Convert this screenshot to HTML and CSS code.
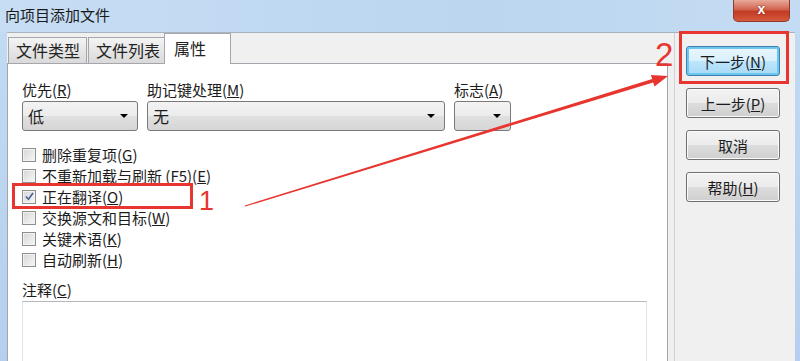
FILE: index.html
```html
<!DOCTYPE html>
<html lang="zh-CN">
<head>
    <meta charset="UTF-8">
    <meta name="viewport" content="width=device-width, initial-scale=1.0">
    <title>向项目添加文件</title>
    <link rel="stylesheet" href="styles.css">
</head>
<body>
    <div class="window">
        <!-- Title bar -->
        <div class="titlebar">
            <span class="title">向项目添加文件</span>
            <div class="close">x</div>
        </div>

        <div class="client">
            <!-- Tab control -->
            <div class="left-pane">
                <div class="tabs">
                    <div class="tab tab-type">文件类型</div>
                    <div class="tab tab-list">文件列表</div>
                    <div class="tab active">属性</div>
                </div>

                <div class="panel">
                    <div class="fields">
                        <div class="field">
                            <div class="label">优先(<u>R</u>)</div>
                            <div class="combo"><span>低</span><span class="arrow"></span></div>
                        </div>
                        <div class="field">
                            <div class="label">助记键处理(<u>M</u>)</div>
                            <div class="combo"><span>无</span><span class="arrow"></span></div>
                        </div>
                        <div class="field">
                            <div class="label">标志(<u>A</u>)</div>
                            <div class="combo"><span></span><span class="arrow"></span></div>
                        </div>
                    </div>

                    <ul class="checks">
                        <li><span class="box"></span>删除重复项(<u>G</u>)</li>
                        <li><span class="box"></span>不重新加载与刷新 (F5)(<u>E</u>)</li>
                        <li>
                            <span class="box">
                                <svg width="11" height="11" viewBox="0 0 11 11"><path d="M2 5.5 L4.5 8.2 L9 2" fill="none" stroke="#4a5e96" stroke-width="1.6"/></svg>
                            </span>正在翻译(<u>O</u>)
                        </li>
                        <li><span class="box"></span>交换源文和目标(<u>W</u>)</li>
                        <li><span class="box"></span>关键术语(<u>K</u>)</li>
                        <li><span class="box"></span>自动刷新(<u>H</u>)</li>
                    </ul>

                    <div class="notes">
                        <div class="label">注释(<u>C</u>)</div>
                        <div class="textarea"></div>
                    </div>
                </div>
            </div>

            <!-- Wizard buttons -->
            <div class="right-pane">
                <button class="btn default">下一步(<u>N</u>)</button>
                <button class="btn">上一步(<u>P</u>)</button>
                <button class="btn">取消</button>
                <button class="btn">帮助(<u>H</u>)</button>
            </div>
        </div>

        <!-- Red annotations drawn over the dialog -->
        <div class="mark mark-1"></div>
        <div class="num num-1">1</div>
        <div class="mark mark-2"></div>
        <div class="num num-2">2</div>
        <svg class="arrow-line" width="800" height="361" viewBox="0 0 800 361">
            <polygon points="244.8,205.4 652.2,79.0 650.9,75.0 668,76 654.5,86.4 653.2,82.4 245.2,206.6" fill="#e8352f"/>
        </svg>
    </div>
</body>
</html>
```

FILE: styles.css
```css
/* General body styling */
body {
    margin: 0;
    font-family: "Noto Sans CJK SC", "Noto Sans", sans-serif;
    font-size: 15px;
    color: #1c1c1c;
    overflow: hidden;
}

/* Whole dialog, blue frame */
.window {
    position: relative;
    width: 800px;
    height: 361px;
    display: flex;
    flex-direction: column;
    background: linear-gradient(to bottom, #c3dbf3, #b4d0ee);
    overflow: hidden;
}

/* Title bar */
.titlebar {
    height: 32px;
    flex-shrink: 0;
    display: flex;
    justify-content: space-between;
    align-items: flex-start;
    background: linear-gradient(to right, #c6ddf4, #bcd6f0 60%, #c4dcf3);
}

.title {
    padding: 5px 0 0 5px;
    line-height: 20px;
    color: #1a1a1a;
}

.close {
    width: 57px;
    height: 22px;
    margin-right: 10px;
    box-sizing: border-box;
    border: 1px solid #8e3a2c;
    border-top: none;
    border-radius: 0 0 5px 5px;
    background: linear-gradient(to bottom, #e9a99a, #d2644f 45%, #c23a22 55%, #d55a3e);
    color: #fff;
    font-family: "Liberation Sans", sans-serif;
    font-weight: bold;
    font-size: 14px;
    line-height: 19px;
    text-align: center;
    text-shadow: 0 0 2px #6a1a10;
}

/* Client area below the title bar */
.client {
    flex: 1;
    min-height: 0;
    display: flex;
    margin: 0 5px 0 7px;
    background-color: #f0f0f0;
    border-top: 1px solid #a9b3bf;
}

.left-pane {
    width: 668px;
    flex-shrink: 0;
    box-sizing: border-box;
    padding-right: 6px;
    border-right: 1px solid #cfd3d8;
    display: flex;
    flex-direction: column;
}

/* Tab strip */
.tabs {
    height: 30px;
    flex-shrink: 0;
    display: flex;
    align-items: flex-end;
    padding-left: 1px;
}

.tab {
    height: 26px;
    box-sizing: border-box;
    border: 1px solid #a3a6ad;
    border-bottom: none;
    background: linear-gradient(to bottom, #f4f4f4, #e6e6e6 50%, #dadada);
    font-size: 16px;
    line-height: 25px;
    padding-left: 7px;
    color: #222;
}

.tab-type {
    width: 79px;
    margin-right: 1px;
}

.tab-list {
    width: 77px;
}

.tab.active {
    width: 67px;
    height: 31px;
    margin-left: -1px;
    margin-bottom: -1px;
    padding-left: 9px;
    background: #fff;
    line-height: 29px;
    position: relative;
    z-index: 1;
}

/* Tab page */
.panel {
    flex: 1 0 auto;
    background-color: #fff;
    border: 1px solid #a3a6ad;
    padding: 17px 0 0 14px;
}

.label {
    line-height: 18px;
    margin-bottom: 2px;
}

.fields {
    display: grid;
    grid-template-columns: 116px 298px 57px;
    column-gap: 9px;
}

/* Drop-down boxes */
.combo {
    height: 30px;
    box-sizing: border-box;
    border: 1px solid #7a7a7a;
    border-radius: 3px;
    background: linear-gradient(to bottom, #f3f3f3, #ececec 50%, #e0e0e0 50%, #d6d6d6);
    display: flex;
    justify-content: space-between;
    align-items: center;
    padding: 0 9px 0 5px;
    font-size: 16px;
}

.arrow {
    width: 0;
    height: 0;
    border-left: 4px solid transparent;
    border-right: 4px solid transparent;
    border-top: 4px solid #000;
}

/* Check boxes */
.checks {
    list-style: none;
    margin: 13px 0 0 0;
    padding: 0;
}

.checks li {
    height: 21px;
    display: flex;
    align-items: center;
}

.box {
    width: 14px;
    height: 14px;
    box-sizing: border-box;
    margin-right: 6px;
    border: 1px solid #8e8f8f;
    background: linear-gradient(135deg, #d6d6d6, #f7f7f7);
    box-shadow: inset 0 0 0 1px #f2f2f2;
    display: flex;
    align-items: center;
    justify-content: center;
}

.box svg {
    display: block;
}

/* Notes field */
.notes {
    margin-top: 11px;
}

.textarea {
    width: 625px;
    height: 80px;
    box-sizing: border-box;
    border: 1px solid #e2e3ea;
    border-top-color: #b5b7bd;
}

/* Wizard buttons */
.right-pane {
    display: flex;
    flex-direction: column;
    gap: 12px;
    padding: 13px 0 0 11px;
}

.btn {
    width: 94px;
    height: 30px;
    flex-shrink: 0;
    border: 1px solid #707070;
    border-radius: 3px;
    background: linear-gradient(to bottom, #f2f2f2, #ebebeb 50%, #dddddd 50%, #cfcfcf);
    box-shadow: inset 0 0 0 1px #fbfbfb;
    font-family: "Noto Sans CJK SC", "Noto Sans", sans-serif;
    font-size: 15px;
    color: #1c1c1c;
    padding: 0;
}

.btn.default {
    border-color: #3c7fb1;
    background: linear-gradient(to bottom, #eaf6fd, #d9f0fc 50%, #bee6fd 50%, #a7d9f5);
    box-shadow: inset 0 0 0 2px #6ec6ee;
}

/* Red annotations */
.mark {
    position: absolute;
    box-sizing: border-box;
    border: 3px solid #e8352f;
}

.mark-1 {
    left: 12px;
    top: 183px;
    width: 181px;
    height: 26px;
}

.mark-2 {
    left: 679px;
    top: 31px;
    width: 110px;
    height: 53px;
}

.num {
    position: absolute;
    font-family: "Liberation Sans", sans-serif;
    color: #e8352f;
}

.num-1 {
    left: 199px;
    top: 191px;
    font-size: 27px;
    line-height: 20px;
}

.num-2 {
    left: 655px;
    top: 43px;
    font-size: 33px;
    line-height: 24px;
}

.arrow-line {
    position: absolute;
    top: 0;
    left: 0;
    pointer-events: none;
}
```
